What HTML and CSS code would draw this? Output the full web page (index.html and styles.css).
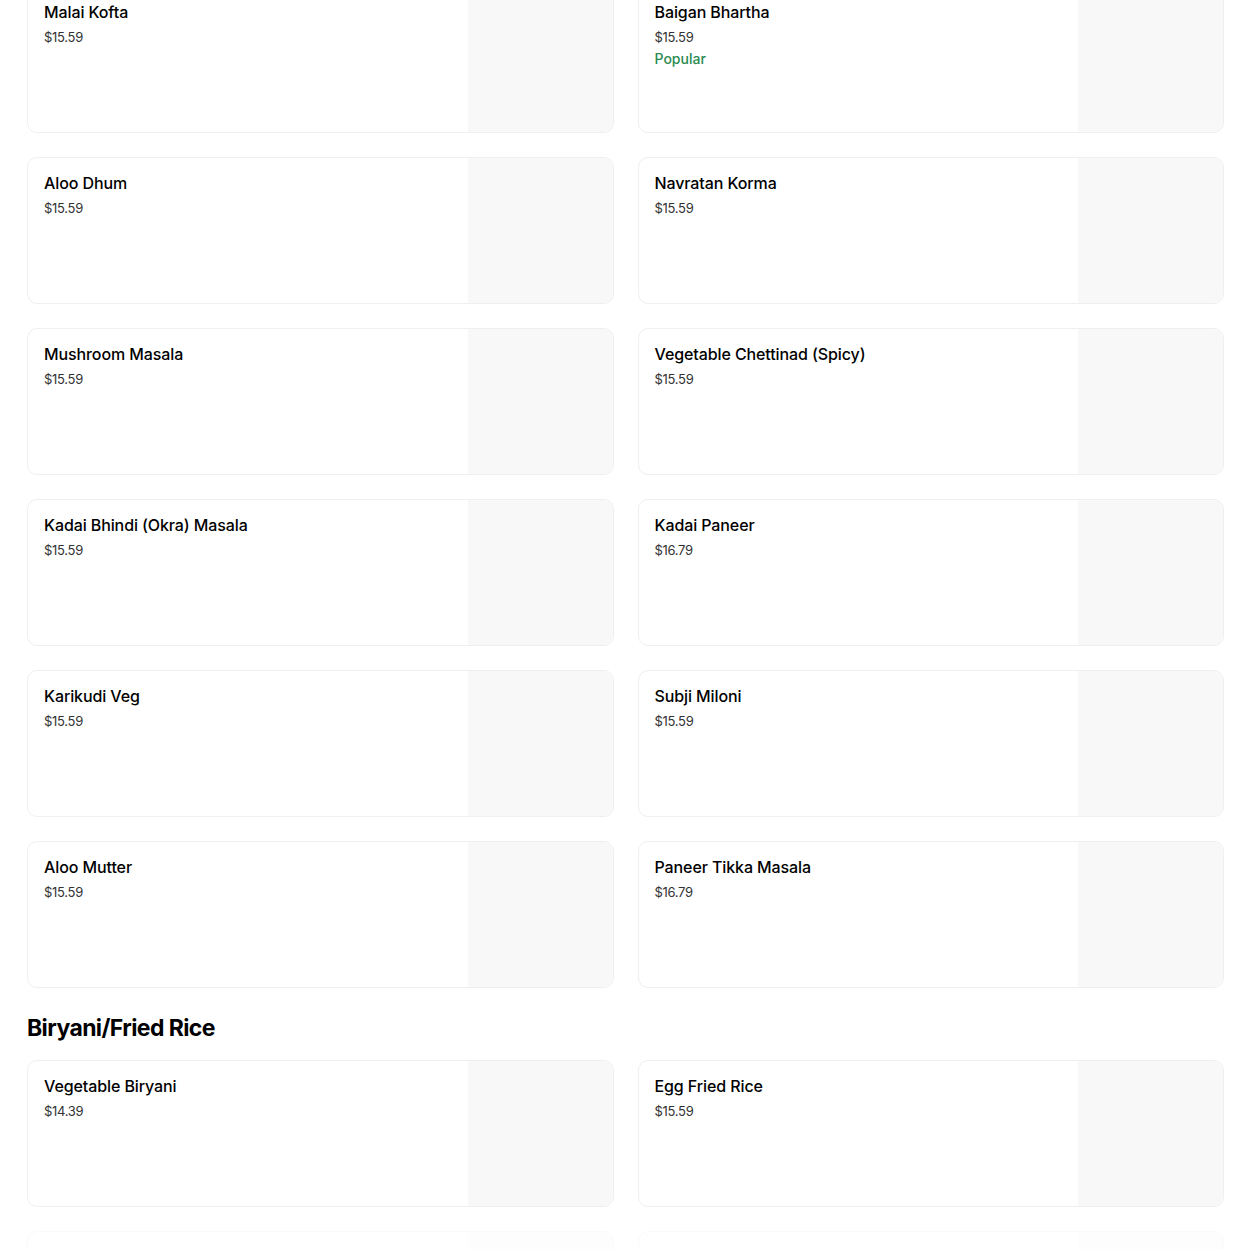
FILE: index.html
```html
<!DOCTYPE html>
<html lang="en">
<head>
  <meta charset="UTF-8" />
  <title>Menu</title>
  <link rel="stylesheet" href="styles.css">
</head>
<body>
  <div class="menu">
    <div class="grid">
      <div class="card">
        <div class="info">
          <div class="name">Malai Kofta</div>
          <div class="price">$15.59</div>
        </div>
        <div class="photo"></div>
      </div>
      <div class="card">
        <div class="info">
          <div class="name">Baigan Bhartha</div>
          <div class="price">$15.59</div>
          <div class="tag">Popular</div>
        </div>
        <div class="photo"></div>
      </div>
      <div class="card">
        <div class="info">
          <div class="name">Aloo Dhum</div>
          <div class="price">$15.59</div>
        </div>
        <div class="photo"></div>
      </div>
      <div class="card">
        <div class="info">
          <div class="name">Navratan Korma</div>
          <div class="price">$15.59</div>
        </div>
        <div class="photo"></div>
      </div>
      <div class="card">
        <div class="info">
          <div class="name">Mushroom Masala</div>
          <div class="price">$15.59</div>
        </div>
        <div class="photo"></div>
      </div>
      <div class="card">
        <div class="info">
          <div class="name">Vegetable Chettinad (Spicy)</div>
          <div class="price">$15.59</div>
        </div>
        <div class="photo"></div>
      </div>
      <div class="card">
        <div class="info">
          <div class="name">Kadai Bhindi (Okra) Masala</div>
          <div class="price">$15.59</div>
        </div>
        <div class="photo"></div>
      </div>
      <div class="card">
        <div class="info">
          <div class="name">Kadai Paneer</div>
          <div class="price">$16.79</div>
        </div>
        <div class="photo"></div>
      </div>
      <div class="card">
        <div class="info">
          <div class="name">Karikudi Veg</div>
          <div class="price">$15.59</div>
        </div>
        <div class="photo"></div>
      </div>
      <div class="card">
        <div class="info">
          <div class="name">Subji Miloni</div>
          <div class="price">$15.59</div>
        </div>
        <div class="photo"></div>
      </div>
      <div class="card">
        <div class="info">
          <div class="name">Aloo Mutter</div>
          <div class="price">$15.59</div>
        </div>
        <div class="photo"></div>
      </div>
      <div class="card">
        <div class="info">
          <div class="name">Paneer Tikka Masala</div>
          <div class="price">$16.79</div>
        </div>
        <div class="photo"></div>
      </div>
    </div>

    <h2 class="section-title">Biryani/Fried Rice</h2>
    <div class="grid">
      <div class="card">
        <div class="info">
          <div class="name">Vegetable Biryani</div>
          <div class="price">$14.39</div>
        </div>
        <div class="photo"></div>
      </div>
      <div class="card">
        <div class="info">
          <div class="name">Egg Fried Rice</div>
          <div class="price">$15.59</div>
        </div>
        <div class="photo"></div>
      </div>
      <div class="card faded">
        <div class="info">
          <div class="name">Chicken Fried Rice</div>
        </div>
        <div class="photo"></div>
      </div>
      <div class="card faded">
        <div class="info">
          <div class="name">Veg Fried Rice</div>
        </div>
        <div class="photo"></div>
      </div>
    </div>
  </div>
</body>
</html>
```

FILE: styles.css
```css
body {
  margin: 0;
  background-color: #fff;
  color: #000;
  font-family: Inter, 'Noto Sans', sans-serif;
  overflow: hidden;
}

.menu {
  margin-top: -14px;
  padding: 0 26px 0 27px;
}

.grid {
  display: grid;
  grid-template-columns: 1fr 1fr;
  column-gap: 24px;
  row-gap: 24px;
}

.card {
  display: flex;
  height: 147px;
  box-sizing: border-box;
  border: 1px solid #efefef;
  border-radius: 10px;
  overflow: hidden;
}

.card.faded {
  opacity: 0.25;
}

.info {
  flex: 1;
  padding: 15px 16px;
}

.name {
  font-size: 16px;
  font-weight: 500;
  line-height: 20px;
  letter-spacing: -0.1px;
}

.price {
  margin-top: 5px;
  font-size: 13px;
  line-height: 20px;
  color: #333;
  letter-spacing: -0.3px;
}

.tag {
  margin-top: 2px;
  font-size: 14px;
  font-weight: 500;
  line-height: 20px;
  color: #2a8a50;
}

.photo {
  width: 145px;
  background-color: #f8f8f8;
}

.section-title {
  margin: 24px 0 16px;
  font-size: 23px;
  font-weight: 700;
  line-height: 32px;
  letter-spacing: -0.6px;
}
```
